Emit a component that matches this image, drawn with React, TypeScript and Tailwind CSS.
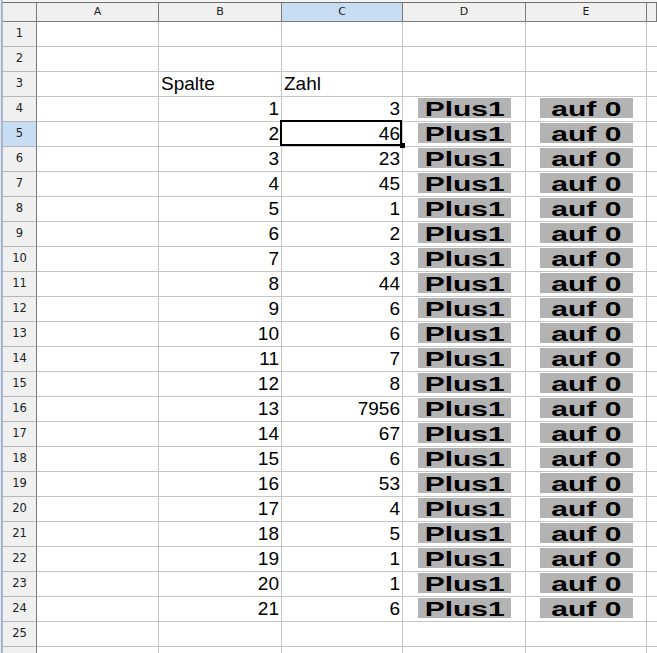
import React from 'react';

const zahlen = [3, 46, 23, 45, 1, 2, 3, 44, 6, 6, 7, 8, 7956, 67, 6, 53, 4, 5, 1, 1, 6];
const spalten = ['A', 'B', 'C', 'D', 'E', ''];

const hdrFont = { fontFamily: '"DejaVu Sans", "Liberation Sans", sans-serif' };

const Knopf: React.FC<{ text: string }> = ({ text }) => (
  <div className="w-[93px] h-[20px] bg-[#b3b3b3] flex justify-center overflow-visible">
    <span className="inline-block text-[20px] leading-[23px] font-bold text-black scale-x-[1.5] whitespace-pre">
      {text}
    </span>
  </div>
);

export default function App() {
  const rows = Array.from({ length: 26 }, (_, i) => i + 1);

  return (
    <div
      className="w-[657px] h-[653px] overflow-hidden bg-white flex"
      style={{ fontFamily: '"Liberation Sans", Arial, sans-serif' }}
    >
      {/* window frame */}
      <div className="w-[3px] shrink-0 bg-[#a7b7cf] border-l border-[#dde4ef]" />

      <div className="flex-1 flex flex-col">
        <div className="h-[2px] shrink-0 bg-[#f3f3f3]" />

        {/* column headers */}
        <div className="grid grid-cols-[34px_122px_123px_121px_123px_121px_1fr] h-[20px] shrink-0 border-t border-[#6f6f6f]">
          <div className="bg-[#f0f0f0] border-r border-b border-[#7a7a7a]" />
          {spalten.map((s) => (
            <div
              key={s || 'f'}
              style={hdrFont}
              className={`flex items-center justify-center text-[11px] text-[#222] border-r border-b border-[#7a7a7a] ${
                s === 'C' ? 'bg-[#c6ddf4]' : 'bg-[#f0f0f0]'
              }`}
            >
              {s}
            </div>
          ))}
        </div>

        {/* rows */}
        {rows.map((r) => {
          const idx = r - 4;
          const hasData = idx >= 0 && idx < zahlen.length;
          return (
            <div key={r} className="grid grid-cols-[34px_122px_123px_121px_123px_121px_1fr] h-[25px] shrink-0">
              <div
                style={hdrFont}
                className={`flex items-center justify-center text-[11.5px] text-[#222] border-r border-r-[#7a7a7a] border-b border-b-[#b5b5b5] ${
                  r === 5 ? 'bg-[#c6ddf4]' : 'bg-[#f0f0f0]'
                }`}
              >
                {r < 26 ? r : null}
              </div>
              {/* A */}
              <div className="border-r border-b border-[#c6c6c6]" />
              {/* B */}
              <div className="border-r border-b border-[#c6c6c6] text-[19px] leading-[19px] pt-[2px] px-[2px] text-black text-right">
                {r === 3 ? <div className="text-left">Spalte</div> : hasData ? idx + 1 : null}
              </div>
              {/* C */}
              <div className="relative border-r border-b border-[#c6c6c6] text-[19px] leading-[19px] pt-[2px] px-[2px] text-black text-right">
                {r === 3 ? <div className="text-left">Zahl</div> : hasData ? zahlen[idx] : null}
                {r === 5 && (
                  <>
                    <div className="absolute -left-[2px] -top-[2px] right-0 bottom-0 border-2 border-black" />
                    <div className="absolute -right-[3px] -bottom-[2px] w-[5px] h-[5px] bg-black z-10" />
                  </>
                )}
              </div>
              {/* D */}
              <div className="border-r border-b border-[#c6c6c6] pl-[15px] pt-[1px]">
                {hasData && <Knopf text="Plus1" />}
              </div>
              {/* E */}
              <div className="border-r border-b border-[#c6c6c6] pl-[14px] pt-[1px]">
                {hasData && <Knopf text="auf 0" />}
              </div>
              <div className="border-b border-[#c6c6c6]" />
            </div>
          );
        })}
      </div>
    </div>
  );
}
